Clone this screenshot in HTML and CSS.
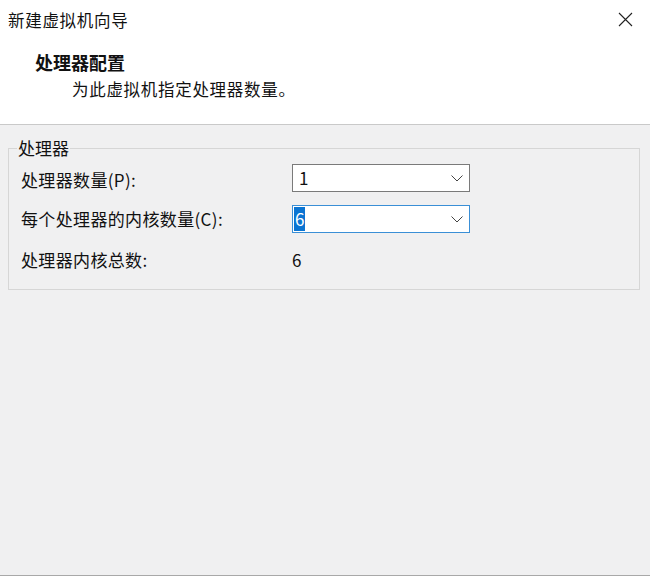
FILE: index.html
```html
<!DOCTYPE html>
<html lang="zh-CN">
<head>
<meta charset="utf-8">
<title>新建虚拟机向导</title>
<link rel="stylesheet" href="styles.css">
</head>
<body>
<div class="window">
  <div class="top">
    <div class="titlebar">
      <span class="title">新建虚拟机向导</span>
      <span class="close" aria-label="关闭">
        <svg width="15" height="15" viewBox="0 0 15 15"><path d="M1 1 L14 14 M14 1 L1 14" stroke="#222" stroke-width="1.1" fill="none"/></svg>
      </span>
    </div>
    <div class="header">
      <div class="heading">处理器配置</div>
      <div class="subtitle">为此虚拟机指定处理器数量。</div>
    </div>
  </div>
  <div class="content">
    <fieldset class="group">
      <legend class="legend">处理器</legend>
      <div class="grid">
        <div class="label">处理器数量(P):</div>
        <div class="combo">
          <span class="value">1</span>
          <svg class="chev" width="12" height="7" viewBox="0 0 12 7"><path d="M0.5 0.5 L6 6 L11.5 0.5" stroke="#444" stroke-width="1" fill="none"/></svg>
        </div>
        <div class="label row2">每个处理器的内核数量(C):</div>
        <div class="combo focused row2">
          <span class="value"><span class="sel">6</span></span>
          <svg class="chev" width="12" height="7" viewBox="0 0 12 7"><path d="M0.5 0.5 L6 6 L11.5 0.5" stroke="#444" stroke-width="1" fill="none"/></svg>
        </div>
        <div class="label row3">处理器内核总数:</div>
        <div class="total row3">6</div>
      </div>
    </fieldset>
  </div>
</div>
</body>
</html>
```
FILE: styles.css
```css
html, body {
  margin: 0;
  padding: 0;
}
body {
  width: 650px;
  height: 576px;
  background: #f0f0f1;
  font-family: "Noto Sans CJK SC", "Noto Sans", sans-serif;
  color: #111;
  overflow: hidden;
}
.window {
  height: 576px;
  box-sizing: border-box;
  border-bottom: 1px solid #a8a8a8;
  display: flex;
  flex-direction: column;
}
.top {
  background: #fff;
  height: 124px;
  border-bottom: 1px solid #c9c9c9;
  box-sizing: content-box;
}
.titlebar {
  height: 40px;
  display: flex;
  align-items: center;
  justify-content: space-between;
  padding: 0 17px 0 8px;
}
.title {
  font-size: 16.5px;
  line-height: 20px;
  letter-spacing: 0.7px;
}
.close {
  display: flex;
  width: 15px;
  height: 15px;
  margin-top: -2px;
}
.header {
  padding-left: 35px;
}
.heading {
  font-size: 18px;
  font-weight: bold;
  line-height: 22px;
  margin-top: 11px;
}
.subtitle {
  font-size: 16.5px;
  line-height: 20px;
  letter-spacing: 0.7px;
  padding-left: 37px;
  margin-top: 6px;
}
.content {
  flex: 1;
}
.group {
  margin: 14px 10px 0 8px;
  padding: 7px 12px 23px 12px;
  border: 1px solid #d6d6d6;
}
.legend {
  font-size: 17px;
  line-height: 18px;
  padding: 0 1px;
  margin-left: -4px;
}
.grid {
  display: grid;
  grid-template-columns: 271px 178px;
  grid-template-rows: 28px 28px 20px;
  row-gap: 13px;
  align-items: center;
}
.grid .row3 {
  margin-top: 8px;
}
.label {
  font-size: 17px;
  line-height: 20px;
  letter-spacing: 0.35px;
  margin-top: 3px;
}
.label.row2 {
  margin-top: 0;
}
.combo {
  height: 28px;
  box-sizing: border-box;
  border: 1px solid #7a7a7a;
  background: #fff;
  display: flex;
  align-items: center;
  justify-content: space-between;
  padding: 0 6px 0 6px;
}
.combo.focused {
  border-color: #3a8fd6;
  padding-left: 1px;
}
.value {
  font-size: 17px;
  line-height: 20px;
  display: flex;
}
.sel {
  background: #0a74d2;
  color: #fff;
  padding: 1px 1px;
  line-height: 22px;
}
.chev {
  display: block;
  margin-top: 1px;
}
.total {
  font-size: 17px;
  line-height: 20px;
}
```
